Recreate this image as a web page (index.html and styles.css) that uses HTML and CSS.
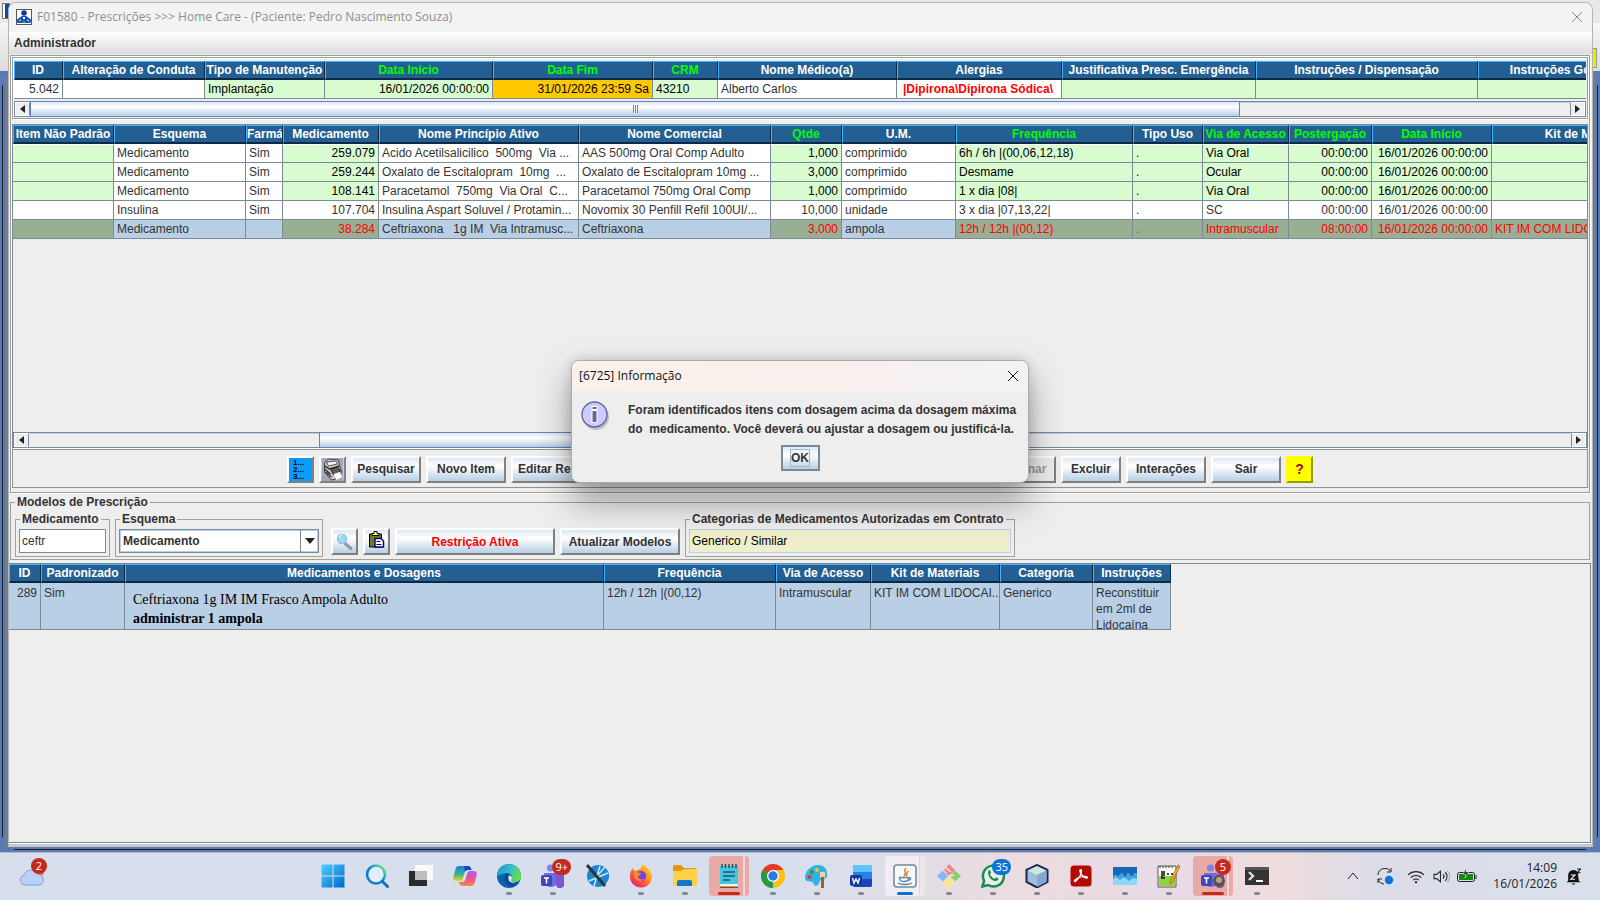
FILE: index.html
```html
<!DOCTYPE html>
<html lang="pt-BR">
<head>
  <meta charset="UTF-8">
  <meta name="viewport" content="width=device-width, initial-scale=1.0">
  <title>F01580 - Prescrições</title>
  <link rel="stylesheet" href="styles.css">
</head>
<body>
  <div class="desktop">
    <div class="back-icon"></div>
    <div class="back-yellow"></div>
    <main class="window">
      <header class="titlebar">
        <svg class="app-icon" viewBox="0 0 16 16"><rect x=".5" y=".5" width="15" height="15" fill="#fff" stroke="#555"/><circle cx="8" cy="4" r="2.800" fill="#0b3c9c"/><path d="M2 14c-1.500-1-1.500-4 .5-4.500L6 7h4l3.500 2.500c2 .5 2 3.500.5 4.500z" fill="#0d47b0"/><path d="M6.500 8h3L8 11z" fill="#fff"/><path d="M3 12.500l2-2M13 12.500l-2-2" stroke="#8fb8f0" stroke-width="1.500"/><path d="M6.500 12h3v2h-3z" fill="#2da44e"/></svg>
        <h1>F01580 - Prescrições &gt;&gt;&gt; Home Care - (Paciente: Pedro Nascimento Souza)</h1>
        <button class="close" aria-label="Fechar"><svg viewBox="0 0 12 12"><path d="M1 1l10 10M11 1L1 11"/></svg></button>
      </header>
      <nav class="menubar"><button>Administrador</button></nav>

      <section class="panel etched">
        <div class="group etched">
          <div class="clip">
            <table class="grid prescricao">
              <colgroup><col><col><col><col><col><col><col><col><col><col><col></colgroup>
              <thead>
                <tr><th>ID</th><th>Alteração de Conduta</th><th>Tipo de Manutenção</th><th class="req">Data Início</th><th class="req">Data Fim</th><th class="req">CRM</th><th>Nome Médico(a)</th><th>Alergias</th><th>Justificativa Presc. Emergência</th><th>Instruções / Dispensação</th><th>Instruções Gerais</th></tr>
              </thead>
              <tbody>
                <tr><td class="num">5.042</td><td></td><td class="edit">Implantação</td><td class="edit num">16/01/2026 00:00:00</td><td class="warn num">31/01/2026 23:59 Sa</td><td class="edit">43210</td><td>Alberto Carlos</td><td class="alergia">|Dipirona\Dipirona Sódica\</td><td class="edit"></td><td class="edit"></td><td class="edit"></td></tr>
              </tbody>
            </table>
          </div>
          <div class="scrollbar">
            <button class="arrow left" aria-label="Esquerda"></button>
            <div class="track"><div class="thumb thumb-top"><i></i></div></div>
            <button class="arrow right" aria-label="Direita"></button>
          </div>
        </div>

        <div class="items">
          <div class="clip viewport">
            <table class="grid itens">
              <colgroup><col><col><col><col><col><col><col><col><col><col><col><col><col><col></colgroup>
              <thead>
                <tr><th>Item Não Padrão</th><th>Esquema</th><th class="cut">Farmá</th><th>Medicamento</th><th>Nome Princípio Ativo</th><th>Nome Comercial</th><th class="req">Qtde</th><th>U.M.</th><th class="req">Frequência</th><th>Tipo Uso</th><th class="req">Via de Acesso</th><th class="req">Postergação</th><th class="req">Data Início</th><th>Kit de Materiais</th></tr>
              </thead>
              <tbody>
                <tr><td class="edit"></td><td>Medicamento</td><td>Sim</td><td class="edit num">259.079</td><td>Acido Acetilsalicilico  500mg  Via ...</td><td>AAS 500mg Oral Comp Adulto</td><td class="edit num">1,000</td><td>comprimido</td><td class="edit">6h / 6h |(00,06,12,18)</td><td class="edit">.</td><td class="edit">Via Oral</td><td class="edit num">00:00:00</td><td class="edit num">16/01/2026 00:00:00</td><td class="edit"></td></tr>
                <tr><td class="edit"></td><td>Medicamento</td><td>Sim</td><td class="edit num">259.244</td><td>Oxalato de Escitalopram  10mg  ...</td><td>Oxalato de Escitalopram 10mg ...</td><td class="edit num">3,000</td><td>comprimido</td><td class="edit">Desmame</td><td class="edit">.</td><td class="edit">Ocular</td><td class="edit num">00:00:00</td><td class="edit num">16/01/2026 00:00:00</td><td class="edit"></td></tr>
                <tr><td class="edit"></td><td>Medicamento</td><td>Sim</td><td class="edit num">108.141</td><td>Paracetamol  750mg  Via Oral  C...</td><td>Paracetamol 750mg Oral Comp</td><td class="edit num">1,000</td><td>comprimido</td><td class="edit">1 x dia |08|</td><td class="edit">.</td><td class="edit">Via Oral</td><td class="edit num">00:00:00</td><td class="edit num">16/01/2026 00:00:00</td><td class="edit"></td></tr>
                <tr><td></td><td>Insulina</td><td>Sim</td><td class="num">107.704</td><td>Insulina Aspart Soluvel / Protamin...</td><td>Novomix 30 Penfill Refil 100UI/...</td><td class="num">10,000</td><td>unidade</td><td>3 x dia |07,13,22|</td><td>.</td><td>SC</td><td class="num">00:00:00</td><td class="num">16/01/2026 00:00:00</td><td></td></tr>
                <tr class="selected"><td class="edit"></td><td>Medicamento</td><td></td><td class="edit num">38.284</td><td>Ceftriaxona   1g IM  Via Intramusc...</td><td>Ceftriaxona</td><td class="edit num">3,000</td><td>ampola</td><td class="edit">12h / 12h |(00,12)</td><td class="edit">.</td><td class="edit">Intramuscular</td><td class="edit num">08:00:00</td><td class="edit num">16/01/2026 00:00:00</td><td class="edit">KIT IM COM LIDOCAINA</td></tr>
              </tbody>
            </table>
          </div>
          <div class="scrollbar">
            <button class="arrow left" aria-label="Esquerda"></button>
            <div class="track"><div class="thumb thumb-items"></div></div>
            <button class="arrow right" aria-label="Direita"></button>
          </div>
        </div>

        <div class="toolbar">
          <button class="btn icon list" aria-label="Lista"><span>1...</span><span>2...</span><span>3...</span></button>
          <button class="btn icon" aria-label="Imprimir"><svg viewBox="0 0 22 23"><path fill="#a5a5bd" d="M0 0h22v23H0z"/><path d="M3 5l4-4 10 1 1 6 2 5-2 7-8 2-7-8z" fill="#c9c9c9" stroke="#444"/><path d="M5 4l9-1 2 3-9 2z" fill="#f4f4f4" stroke="#555"/><path d="M3 8l5 3 10-3M3 11l6 5M4 14l6 5" stroke="#333" stroke-width="1.500" fill="none"/><path d="M9 11l7-2 3 4-7 4z" fill="#6b5555" stroke="#222"/><path d="M12 16l6-2 3 5-6 3z" fill="#fff"/></svg></button>
          <button class="btn w70">Pesquisar</button>
          <button class="btn w80">Novo Item</button>
          <button class="btn w106">Editar Restrição</button>
          <button class="btn disabled" disabled>Selecionar</button>
          <button class="btn w60">Excluir</button>
          <button class="btn w80">Interações</button>
          <button class="btn w70">Sair</button>
          <button class="btn icon help" aria-label="Ajuda">?</button>
        </div>
      </section>

      <fieldset class="modelos">
        <legend>Modelos de Prescrição</legend>
        <div class="filters">
          <fieldset class="box box-med">
            <legend><label for="medicamento">Medicamento</label></legend>
            <input id="medicamento" type="text" value="ceftr">
          </fieldset>
          <fieldset class="box box-esq">
            <legend><label for="esquema">Esquema</label></legend>
            <div class="combo"><select id="esquema"><option>Medicamento</option></select></div>
          </fieldset>
          <button class="btn icon search" aria-label="Buscar"><svg viewBox="0 0 22 23"><path d="M11.500 13.500l6 5" stroke="#8d98a5" stroke-width="3" stroke-linecap="round"/><circle cx="8.500" cy="9" r="4.500" fill="#8fdcfa" stroke="#a9bccb" stroke-width="1.500"/><path d="M6 8c0-2 1-3 3-3" stroke="#fff" fill="none"/></svg></button>
          <button class="btn icon" aria-label="Colar"><svg viewBox="0 0 22 23"><path d="M4 4h12v13H4z" fill="#767621" stroke="#000"/><path d="M6.500 5.500h7V3.500h-2v-2h-3v2h-2z" fill="#ff6" stroke="#000"/><path d="M9.500 8.500h6l2.500 2.500v6H9.500z" fill="#fff" stroke="#000080" stroke-width="1.400"/><path d="M11 11.500h4M11 14.500h5" stroke="#000080"/></svg></button>
          <button class="btn w160 alert">Restrição Ativa</button>
          <button class="btn w120">Atualizar Modelos</button>
          <fieldset class="box box-cat">
            <legend><label for="categorias">Categorias de Medicamentos Autorizadas em Contrato</label></legend>
            <input id="categorias" class="yellow" type="text" value="Generico / Similar" readonly>
          </fieldset>
        </div>
      </fieldset>

      <section class="results">
        <table class="grid modelo">
          <colgroup><col><col><col><col><col><col><col><col></colgroup>
          <thead>
            <tr><th>ID</th><th>Padronizado</th><th>Medicamentos e Dosagens</th><th>Frequência</th><th>Via de Acesso</th><th>Kit de Materiais</th><th>Categoria</th><th>Instruções</th></tr>
          </thead>
          <tbody>
            <tr><td class="num">289</td><td>Sim</td><td class="dosagem">Ceftriaxona 1g IM IM Frasco Ampola Adulto<br><b>administrar 1 ampola</b></td><td>12h / 12h |(00,12)</td><td>Intramuscular</td><td class="kit">KIT IM COM LIDOCAI...</td><td>Generico</td><td><div class="multi">Reconstituir<br>em 2ml de<br>Lidocaína</div></td></tr>
          </tbody>
        </table>
      </section>
    </main>
  </div>

  <div class="dialog" role="dialog" aria-labelledby="dlg-title">
    <div class="dialog-title">
      <h2 id="dlg-title">[6725] Informação</h2>
      <button class="close" aria-label="Fechar"><svg viewBox="0 0 12 12"><path d="M1 1l10 10M11 1L1 11"/></svg></button>
    </div>
    <div class="dialog-body">
      <svg class="info" viewBox="0 0 32 32"><circle cx="15" cy="16" r="13" fill="#8a8a8a" opacity=".45"/><circle cx="13.500" cy="13.500" r="12.500" fill="#ccf" stroke="#669" stroke-width="1.400"/><path d="M11 5.500h5v3h-5zM11 9.500h5v12h-5z" fill="#669" stroke="#fff"/></svg>
      <p>Foram identificados itens com dosagem acima da dosagem máxima<br>do&nbsp; medicamento. Você deverá ou ajustar a dosagem ou justificá-la.</p>
    </div>
    <div class="dialog-actions"><button class="ok"><span>OK</span></button></div>
  </div>

  <footer class="taskbar">
    <div class="weather">
      <svg viewBox="0 0 26 22"><circle cx="20" cy="7" r="5" fill="#f5842a"/><path d="M6 20a5 5 0 0 1-1-9.800A7.500 7.500 0 0 1 19 9.500a5.300 5.300 0 0 1 1 10.500z" fill="#b9d0f7" stroke="#7fa3e6"/></svg>
      <span class="badge red">2</span>
    </div>

    <div class="apps">
      <button class="app" aria-label="Iniciar"><svg viewBox="0 0 24 24"><defs><linearGradient id="win" x2="1" y2="1"><stop stop-color="#4fd0ff"/><stop offset="1" stop-color="#0067c9"/></linearGradient></defs><path d="M.5.5h11v11H.5zM12.500.5h11v11h-11zM.5 12.500h11v11H.5zM12.500 12.500h11v11h-11z" fill="url(#win)"/></svg></button>
      <button class="app" aria-label="Pesquisar"><svg viewBox="0 0 24 24"><defs><linearGradient id="lupa" x1="1" x2="0" y2="1"><stop offset=".1" stop-color="#5fe08a"/><stop offset=".5" stop-color="#0d7fd8"/></linearGradient></defs><circle cx="11" cy="10.500" r="9" fill="#e3eefa" stroke="url(#lupa)" stroke-width="2.600"/><path d="M17.500 17.500l5 5" stroke="#0a72cc" stroke-width="3" stroke-linecap="round"/></svg></button>
      <button class="app" aria-label="Tarefas"><svg viewBox="0 0 24 24"><path d="M0 7h18v15H0z" fill="#2c2c2c"/><path d="M6 1h18v15H6z" fill="#fafafa"/><path d="M6 7h12v9H6z" fill="#bdbdbd"/></svg></button>
      <button class="app" aria-label="Copilot"><svg viewBox="0 0 24 24"><defs><linearGradient id="cpa" y2="1" x2="0"><stop stop-color="#1382e6"/><stop offset=".55" stop-color="#3bb58a"/><stop offset="1" stop-color="#f5d321"/></linearGradient><linearGradient id="cpb" y2="1" x2="0"><stop stop-color="#b15bee"/><stop offset=".6" stop-color="#f0568c"/><stop offset="1" stop-color="#ff8c3a"/></linearGradient></defs><path d="M6 2h9c2 0 3 2 3.500 4H15c-2 0-3 1-3.500 3L10 14c-.6 2-1.500 3-3 3H3c-3 0-3-3-2.500-5l2-7C3 3 4 2 6 2z" fill="url(#cpa)"/><path d="M11 2h4c2 0 3 2 3.500 4H15c-1.500 0-2.500.5-3 2z" fill="#1746c8"/><path d="M18 22H9c-2 0-2.500-2-3-4h3c2 0 3-1 3.500-3L14 10c.6-2 1.500-3 3-3h4c3 0 3 3 2.500 5l-2 7c-.5 2-1.500 3-3.500 3z" fill="url(#cpb)"/></svg></button>
      <button class="app run" aria-label="Edge"><svg viewBox="0 0 24 24"><defs><linearGradient id="edge" x2="1" y2=".4"><stop stop-color="#1593dc"/><stop offset=".6" stop-color="#35c1c8"/><stop offset="1" stop-color="#62dc4e"/></linearGradient></defs><circle cx="12" cy="12" r="12" fill="#0f5fb0"/><path d="M0 12a12 12 0 0 1 24 0c0 4-3 6-6 6-2.500 0-4-1-4-2 0-.8 1-1 1-3s-2-4-5-4c-5 0-8 3-10 3z" fill="url(#edge)"/><path d="M10 9c-5 3-3 12 4 13 3 .5 6-1 8-3-6 2-10-1-10-4 0-3 0-5-2-6z" fill="#0b4a92"/><path d="M12 11.500c1 0 3 .5 3 2.500 0 1-1 1.500-1 2.200 0 1 2 2 4 2-2 1.500-6 0-6.500-3-.2-1.500 0-3 .5-3.700z" fill="#e3eaf5"/></svg></button>
      <button class="app run" aria-label="Teams"><svg viewBox="0 0 24 24"><circle cx="9.500" cy="4" r="3.600" fill="#7e84ec"/><circle cx="18" cy="6" r="3" fill="#5059c9"/><path d="M3 9h13v9a6 6 0 0 1-6 5 6 6 0 0 1-6-5z" fill="#6a70e2"/><path d="M15 10h8v9a4 4 0 0 1-8 2z" fill="#7b57d6"/><rect x="0" y="11" width="11" height="11" rx="2" fill="#4048b8"/><path d="M3 14h5M5.500 14v5.500" stroke="#fff" stroke-width="1.500"/></svg><span class="badge red">9+</span></button>
      <button class="app" aria-label="Editor"><svg viewBox="0 0 24 24"><circle cx="13" cy="12" r="11" fill="#1b86d6"/><path d="M4 17L23 9M9 22L15 2M12 12l8-9" stroke="#cfe8fb" stroke-width="1.500"/><path d="M2 1l18 21" stroke="#333" stroke-width="3"/></svg></button>
      <button class="app run" aria-label="Firefox"><svg viewBox="0 0 24 24"><defs><linearGradient id="ff" x1="1" x2=".2" y2="1"><stop stop-color="#ffe52e"/><stop offset=".45" stop-color="#ff9422"/><stop offset=".8" stop-color="#ff3a55"/><stop offset="1" stop-color="#e31587"/></linearGradient></defs><path d="M14 0c3 3 8 6 9 12a11 11 0 0 1-22 1C.7 9 2 6 4 4l1 3 4-1c1-1 3-1 3-2 0-2 1-3 2-4z" fill="url(#ff)"/><circle cx="12" cy="12" r="5.200" fill="#7542e5"/><path d="M5 8c3-1 4 1 7 1 0 2-3 2-3 4 0 2 3 3 6 2-3 4-9 2-10-3z" fill="#ff8a1e"/></svg></button>
      <button class="app run" aria-label="Explorador"><svg viewBox="0 0 24 24"><path d="M0 3a2 2 0 0 1 2-2h6l3 3h11a2 2 0 0 1 2 2v6H0z" fill="#e09a12"/><path d="M0 7h8l3-2h13v17H0z" fill="#ffd04a"/><path d="M4 22v-4a2 2 0 0 1 2-2h11a2 2 0 0 1 2 2v4z" fill="#1478c8"/></svg></button>
      <button class="app run attention" aria-label="Bloco de notas"><svg viewBox="0 0 24 24"><path d="M3 2h18v19H3z" fill="#49c3de"/><path d="M3 20h18v3H3z" fill="#f5efe4"/><path d="M3 22.500h18v1.500H3z" fill="#8a4b17"/><path d="M5 0v4M8.500 0v4M12 0v4M15.500 0v4M19 0v4" stroke="#174c68" stroke-width="1.400"/><path d="M6 8h12M6 12h12M6 16h7" stroke="#135a80" stroke-width="1.600"/></svg></button>
      <button class="app run" aria-label="Chrome"><svg viewBox="0 0 24 24"><circle cx="12" cy="12" r="12" fill="#fbc116"/><path d="M12 12L1.600 6A12 12 0 0 1 22.400 6z" fill="#e33b2e"/><path d="M12 12L1.600 6A12 12 0 0 0 12 24z" fill="#279847"/><path d="M12 6h10.400L17 15z" fill="#fbc116"/><circle cx="12" cy="12" r="6" fill="#fff"/><circle cx="12" cy="12" r="4.700" fill="#2c7be9"/></svg></button>
      <button class="app run" aria-label="Paint"><svg viewBox="0 0 24 24"><path d="M13 1c6 0 10 4 9 11-1 4-4 3-6 4s-2 6-5 6c-2 0-2-3-4-4s-7 0-7-4C0 7 6 1 13 1z" fill="#2fb3ea"/><circle cx="4.500" cy="13" r="2" fill="#d63a2f"/><circle cx="7" cy="8" r="2.200" fill="#3a9b3c"/><circle cx="12" cy="6" r="2" fill="#f6c22d"/><path d="M15 8h5v6h-5z" fill="#f3d09b"/><path d="M16 13h3v11h-3z" fill="#a65f23"/></svg></button>
      <button class="app run" aria-label="Word"><svg viewBox="0 0 24 24"><rect x="4" y="1" width="19" height="22" rx="2" fill="#2a7fe6"/><path d="M4 3c0-1 1-2 2-2h15c1 0 2 1 2 2v5H4z" fill="#62c4ff"/><path d="M4 15h19v6c0 1-1 2-2 2H6c-1 0-2-1-2-2z" fill="#1b44bd"/><rect x="1" y="11" width="12" height="11" rx="2" fill="#123a9c"/><path d="M3.500 14l1.500 5 2-4 2 4 1.500-5" stroke="#fff" stroke-width="1.400" fill="none"/></svg></button>
      <button class="app run active" aria-label="Java"><svg viewBox="0 0 24 24"><rect x="1" y="1" width="22" height="22" rx="3" fill="#f7f8fa" stroke="#71879b" stroke-width="1.500"/><path d="M13 4c-4 4 2 4-2 8M15.500 7c-3 2-1 3-2.500 5" stroke="#ee7a25" stroke-width="1.500" fill="none"/><path d="M6.500 13.500h9c0 3-1 4-4.500 4s-4-1-4.500-4zM15.500 14c3-1 3 2-.5 2.500M5 19c3 2 11 2 14 0" stroke="#5d85a5" stroke-width="1.400" fill="none"/></svg></button>
      <button class="app run" aria-label="Git"><svg viewBox="0 0 24 24"><path d="M12 0l6 6-6 6-5-6z" fill="#f58585"/><path d="M5.500 6.500L11 12l-5 5.500L0 12z" fill="#86b5fb"/><path d="M18 6.500l6 5.500-6 5.500-5-5.500z" fill="#8acb6a"/><path d="M12 13l5.500 5.500L12 24l-6-5.500z" fill="#fbe68a"/><path d="M9 4l5 4M12 12l5-1" stroke="#eee" stroke-width="1.500"/></svg></button>
      <button class="app run" aria-label="WhatsApp"><svg viewBox="0 0 24 24"><path d="M1.500 22.500l1.600-5.700A10.500 10.500 0 1 1 7 21z" fill="#e8efe9" stroke="#1c8a50" stroke-width="2.500"/><path d="M7.500 6.500c1-1 2 0 2.500 2 0 1-1 1-1 1.700 1 2.300 2.300 3.500 4.500 4.500.8 0 1-1.300 2-1.200 2 .8 2.500 1.500 1.500 2.500-4 4-12-4-9.500-9.500z" fill="#1c8a50"/></svg><span class="badge blue">35</span></button>
      <button class="app run" aria-label="VirtualBox"><svg viewBox="0 0 24 24"><path d="M12 1l10.500 5v12L12 23.500 1.500 18V6z" fill="#9cc0dc" stroke="#1b2550" stroke-width="2"/><path d="M12 2l9.500 4.500L12 11 2.500 6.500z" fill="#cfe6dc"/><path d="M12 11v12l9.500-5V6.500z" fill="#86a7cf"/></svg></button>
      <button class="app run" aria-label="Acrobat"><svg viewBox="0 0 24 24"><rect x="1.500" y="1.500" width="21" height="21" rx="3.500" fill="#b30b00"/><path d="M6 17.500c3-1 7-8 6.500-11-.5-1.500-2-.5-1.500 1 .8 3 4 7 7 6.500 1-.5 0-1.600-2-1.600-3.500 0-8 1.800-10 3.600-.8 1-.5 1.600 0 1.500z" fill="none" stroke="#fff" stroke-width="1.400"/></svg></button>
      <button class="app run" aria-label="Monitor"><svg viewBox="0 0 24 24"><path d="M0 3h24v18H0z" fill="#8fd6fa"/><path d="M0 3h24v7l-2-1-3 4-4-4-3 5-3-5-4 4-2-2-3 1z" fill="#1668b8"/><path d="M0 12l3-1 2 2 4-4 3 5 3-5 4 4 3-4 2 1v5l-4-1-4 3-5-4-4 3-4-3-3 2z" fill="#3fa3e6"/></svg></button>
      <button class="app run" aria-label="Notepad++"><svg viewBox="0 0 24 24"><path d="M1 2h18v21H1z" fill="#f7f7f4" stroke="#555"/><path d="M2 12h16v10H2z" fill="#92d33a"/><path d="M3 2v2M6 2v2M9 2v2M12 2v2M15 2v2" stroke="#444"/><path d="M5 7v7h3M7 7v5M10 10h2M14 10h2" stroke="#111" stroke-width="1.500" fill="none"/><path d="M21 1l2 1-8 17-2 1 0-2.500z" fill="#f3b229" stroke="#8a5a17" stroke-width=".7"/></svg></button>
      <button class="app run attention" aria-label="Teams"><svg viewBox="0 0 24 24"><circle cx="9.500" cy="4" r="3.600" fill="#7e84ec"/><path d="M3 9h13v9a6 6 0 0 1-6 5 6 6 0 0 1-6-5z" fill="#6a70e2"/><path d="M15 10h8v9a4 4 0 0 1-8 2z" fill="#7b57d6"/><rect y="11" width="11" height="11" rx="2" fill="#4048b8"/><path d="M3 14h5M5.500 14v5.500" stroke="#fff" stroke-width="1.500"/><circle cx="18" cy="17" r="6" fill="#555"/><circle cx="18" cy="16" r="3" fill="#c49a86"/></svg><span class="badge red">5</span></button>
      <button class="app run" aria-label="Terminal"><svg viewBox="0 0 24 24"><path d="M0 3h24v18H0z" fill="#333"/><path d="M0 3h24v3H0z" fill="#555"/><path d="M4 8l4 4-4 4" stroke="#ddd" stroke-width="2.400" fill="none"/><path d="M11 17h7" stroke="#fff" stroke-width="2"/></svg></button>
    </div>

    <div class="tray">
      <svg class="chev" viewBox="0 0 12 12"><path d="M1 9l5-6 5 6"/></svg>
      <svg class="sync" viewBox="0 0 18 18"><path d="M2 8a7 7 0 0 1 12.500-4M15 1v4h-4M2 16v-4h4M2 12a7 7 0 0 0 6 5"/><circle cx="13" cy="13" r="4.200"/></svg>
      <svg class="wifi" viewBox="0 0 16 16"><path d="M1 7a10 10 0 0 1 14 0M3.300 9.500a6.600 6.600 0 0 1 9.400 0M5.500 11.700a3.600 3.600 0 0 1 5 0"/><circle cx="8" cy="13.500" r="1"/></svg>
      <svg class="sound" viewBox="0 0 16 16"><path d="M1 6h2.500L7 3v10L3.500 10H1zM9.500 6a3 3 0 0 1 0 4M11.500 4a5.500 5.500 0 0 1 0 8"/><path d="M13.500 2.500a8 8 0 0 1 0 11" stroke="#aaa"/></svg>
      <svg class="battery" viewBox="0 0 22 16"><rect x="1.500" y="4.500" width="17" height="9" rx="2"/><path class="cap" d="M20 7v4"/><path class="fill" d="M3 6h14v6H3z"/><path class="bolt" d="M10.500 0L7 6h3l-1 4 4-6h-3z"/></svg>
      <div class="clock"><span>14:09</span><span>16/01/2026</span></div>
      <svg class="bell" viewBox="0 0 16 16"><path d="M3 12V6a5 5 0 0 1 9-2l1 8 1.500 1.500h-13zM6 14.500h4L8 16z" fill="#111"/><path d="M5.500 6.500h4l-4 4h4" stroke="#fff" fill="none"/><path d="M11.500 1h3l-3 3.500h3" stroke="#111" fill="none"/></svg>
    </div>
  </footer>
</body>
</html>
```
FILE: styles.css
```css
* {
  box-sizing: border-box;
}

body {
  margin: 0;
  height: 100vh;
  display: flex;
  flex-direction: column;
  overflow: hidden;
  font-family: "Liberation Sans", Arial, sans-serif;
  font-size: 12px;
  color: #333;
}

button, input, select {
  font: inherit;
  color: inherit;
  margin: 0;
}

button {
  padding: 0;
  border: 0;
  background: none;
}

/* parent window peeking out behind the form */
.desktop {
  position: relative;
  flex: 1;
  min-height: 0;
  display: flex;
  padding: 2px 7px 5px 8px;
  background:
    linear-gradient(#e8e8e8, #e8e8e8) 0 0 / 100% 23px no-repeat,
    linear-gradient(#f6f6f6, #dcdcdc) 0 23px / 100% 48px no-repeat,
    linear-gradient(#222, #222) 14px calc(100% - 2px) / calc(100% - 28px) 1px no-repeat,
    linear-gradient(#222, #222) 2px 85px / 1px calc(100% - 100px) no-repeat,
    linear-gradient(#222, #222) calc(100% - 2px) 85px / 1px calc(100% - 100px) no-repeat,
    linear-gradient(#6f7d8d, #6f7d8d) 5px 76px / calc(100% - 9px) calc(100% - 81px) no-repeat,
    #5a7ab5;
}

.back-icon {
  position: absolute;
  left: 2px;
  top: 3px;
  width: 8px;
  height: 16px;
  border: 1px solid #777;
  background: linear-gradient(to right, #fff 40%, #0d47b0 40%);
}

.back-yellow {
  position: absolute;
  right: 3px;
  top: 48px;
  width: 8px;
  height: 20px;
  border: 1px solid #999;
  background: #ebeb00;
}

.window {
  position: relative;
  flex: 1;
  min-width: 0;
  display: flex;
  flex-direction: column;
  border: 1px solid #b4b4b4;
  border-bottom: 3px solid #c9c9c9;
  border-radius: 8px 8px 0 0;
  background: #eee;
  overflow: hidden;
}

.titlebar {
  height: 29px;
  display: flex;
  align-items: center;
  gap: 5px;
  padding: 0 9px 1px 7px;
  background: #f3f3f3;
}

.app-icon {
  width: 16px;
  height: 16px;
}

.titlebar h1 {
  flex: 1;
  margin: 0;
  font: 12px/16px "Open Sans", "Noto Sans", sans-serif;
  color: #8f8f8f;
}

.close {
  width: 12px;
  height: 12px;
}

.close svg {
  display: block;
  width: 12px;
  height: 12px;
  fill: none;
  stroke: #888;
}

.menubar {
  height: 22px;
  display: flex;
  align-items: center;
  padding-left: 5px;
  background: linear-gradient(#fff, #dcdcdc);
}

.menubar button {
  font-weight: bold;
}

.etched {
  border: 1px solid #9d9d97;
  box-shadow: inset 1px 1px #fff, 1px 1px #fff;
}

.panel {
  margin: 1px 2px 0 1px;
  padding: 1px;
}

.group {
  padding: 3px 1px 1px;
}

.clip {
  overflow: hidden;
}

/* tables */
.grid {
  table-layout: fixed;
  border-collapse: separate;
  border-spacing: 0;
}

.grid th {
  height: 19px;
  padding: 1px 1px 0 0;
  border: 1px solid #3fb4ff;
  border-right-color: #0b2a45;
  border-bottom: 2px solid #0b2a45;
  background: #235f93;
  color: #fff;
  line-height: 15px;
  white-space: nowrap;
}

.grid th.req {
  color: #0f0;
}

.grid th.cut {
  overflow: hidden;
  text-align: left;
}

.grid td {
  height: 19px;
  padding: 1px 3px 0;
  border-right: 1px solid #7a8a99;
  border-bottom: 1px solid #7a8a99;
  background: #fff;
  line-height: 17px;
  white-space: pre;
  overflow: hidden;
}

.grid .num {
  text-align: right;
}

.grid .edit {
  background: #d9fbd0;
  color: #000;
}

.grid .warn {
  background: #ffc800;
  color: #000;
}

.grid .alergia {
  padding-left: 6px;
  font-weight: bold;
  color: #f00;
}

.grid .selected td {
  background: #b8cfe5;
}

.grid .selected .edit {
  background: #98af94;
  color: #f00;
}

.prescricao { width: 1630px; }
.prescricao col:nth-child(1) { width: 49px; }
.prescricao col:nth-child(2) { width: 142px; }
.prescricao col:nth-child(3) { width: 120px; }
.prescricao col:nth-child(4) { width: 168px; }
.prescricao col:nth-child(5) { width: 160px; }
.prescricao col:nth-child(6) { width: 65px; }
.prescricao col:nth-child(7) { width: 179px; }
.prescricao col:nth-child(8) { width: 165px; }
.prescricao col:nth-child(9) { width: 194px; }
.prescricao col:nth-child(10) { width: 222px; }
.prescricao col:nth-child(11) { width: 166px; }

.itens { width: 1674px; }
.itens col:nth-child(1) { width: 101px; }
.itens col:nth-child(2) { width: 132px; }
.itens col:nth-child(3) { width: 37px; }
.itens col:nth-child(4) { width: 96px; }
.itens col:nth-child(5) { width: 200px; }
.itens col:nth-child(6) { width: 192px; }
.itens col:nth-child(7) { width: 71px; }
.itens col:nth-child(8) { width: 114px; }
.itens col:nth-child(9) { width: 177px; }
.itens col:nth-child(10) { width: 70px; }
.itens col:nth-child(11) { width: 86px; }
.itens col:nth-child(12) { width: 83px; }
.itens col:nth-child(13) { width: 120px; }
.itens col:nth-child(14) { width: 195px; }

.modelo { width: 1162px; }
.modelo col:nth-child(1) { width: 32px; }
.modelo col:nth-child(2) { width: 84px; }
.modelo col:nth-child(3) { width: 479px; }
.modelo col:nth-child(4) { width: 172px; }
.modelo col:nth-child(5) { width: 95px; }
.modelo col:nth-child(6) { width: 129px; }
.modelo col:nth-child(7) { width: 93px; }
.modelo col:nth-child(8) { width: 78px; }

.modelo td {
  height: 47px;
  padding-top: 2px;
  vertical-align: top;
  background: #b8cfe5;
  line-height: 16px;
}

.modelo .dosagem {
  padding: 7px 8px 0;
  font: 14px/19px "Liberation Serif", "Times New Roman", serif;
  color: #000;
}

.modelo .kit {
  padding-right: 0;
}

.multi {
  height: 44px;
  overflow: hidden;
}

/* scrollbars */
.scrollbar {
  display: flex;
  height: 16px;
  border: 1px solid #7a8a99;
  background: #eee;
}

.group .scrollbar {
  margin-top: 2px;
}

.arrow {
  width: 15px;
  display: flex;
  align-items: center;
  justify-content: center;
  border: 1px solid #fff;
}

.arrow::before {
  content: "";
  border: 4px solid transparent;
}

.arrow.left {
  border-right: 1px solid #7a8a99;
}

.arrow.left::before {
  border-right: 5px solid #222;
  border-left: 0;
}

.arrow.right {
  border-left: 1px solid #7a8a99;
}

.arrow.right::before {
  border-left: 5px solid #222;
  border-right: 0;
}

.track {
  flex: 1;
  border-top: 1px solid #b8cfe5;
}

.thumb {
  height: 16px;
  margin-top: -2px;
  border: 1px solid #6382bf;
  background: linear-gradient(#dde8f3, #fff 35%, #b8cfe5);
}

.thumb-top {
  width: 78.6%;
  display: flex;
  align-items: center;
  justify-content: center;
}

.thumb-top i {
  width: 5px;
  height: 8px;
  background: repeating-linear-gradient(to right, #6382bf 0 1px, #fff 1px 2px);
}

.thumb-items {
  width: 33%;
  margin-left: 18.8%;
}

.items {
  margin-top: 5px;
  border: 1px solid #7a8a99;
  border-bottom-color: #fff;
}

.viewport {
  height: 307px;
}

.itens tbody tr:first-child td {
  padding-top: 0;
  border-top: 1px solid #fff;
}

/* buttons */
.toolbar {
  display: flex;
  align-items: center;
  justify-content: center;
  gap: 5px;
  height: 39px;
  padding-top: 1px;
  margin-bottom: 3px;
  border: 1px solid #8c9590;
}

.btn {
  height: 27px;
  padding: 0 4px;
  border: 2px solid #fff;
  border-right-color: #808080;
  border-bottom-color: #808080;
  background: linear-gradient(#dde8f3, #fff 35%, #b8cfe5);
  font-weight: bold;
  white-space: nowrap;
}

.btn.icon {
  width: 27px;
  padding: 0;
  flex: none;
}

.btn.icon svg {
  display: block;
  width: 23px;
  height: 23px;
}

.btn.list {
  padding-left: 4px;
  background: #0a9bff;
  color: #000;
  font-size: 8px;
  line-height: 7px;
  text-align: left;
}

.btn.list span {
  display: block;
}

.w60 { width: 60px; }
.w70 { width: 70px; }
.w80 { width: 80px; }
.w106 { width: 106px; }
.w120 { width: 120px; }
.w160 { width: 160px; }

.btn.disabled {
  width: 80px;
  margin-left: 354px;
  background: #eee;
  color: #999;
}

.btn.help {
  border-color: #ff0 #990 #990 #ff0;
  background: #ff0;
  color: #b00000;
  font-size: 14px;
}

.btn.alert {
  color: #f00;
}

/* filters */
fieldset {
  min-width: 0;
  margin: 0;
  border: 1px solid #a3a096;
}

legend {
  padding: 0 2px;
  font-weight: bold;
  line-height: 14px;
}

.modelos {
  margin: 2px 2px 0 1px;
  padding: 3px 4px 2px;
}

.filters {
  display: flex;
  align-items: flex-end;
  gap: 5px;
}

.filters > .btn {
  margin-bottom: 2px;
}

.box {
  padding: 3px;
}

.box legend {
  margin-left: 1px;
}

.box-med { width: 95px; }
.box-esq { width: 208px; }
.box-cat { width: 330px; }

.btn.search {
  margin-left: 3px;
}

.box input {
  display: block;
  width: 100%;
  height: 24px;
  padding: 0 2px;
  border: 1px solid #7a8a99;
  background: #fff;
}

.box input.yellow {
  border: 1px solid #b8cfe5;
  background: #efefce;
  color: #000;
}

.combo {
  position: relative;
  border: 1px solid #7a8a99;
}

.combo select {
  display: block;
  width: 100%;
  height: 22px;
  padding: 0 2px;
  border: 1px solid #b8cfe5;
  border-radius: 0;
  appearance: none;
  background: #fff;
  font-weight: bold;
}

.combo::after {
  content: "";
  position: absolute;
  right: 3px;
  top: 8px;
  border: 5px solid transparent;
  border-top: 6px solid #222;
  border-bottom: 0;
}

.combo::before {
  content: "";
  position: absolute;
  right: 17px;
  top: 0;
  height: 22px;
  border-left: 1px solid #7a8a99;
}

.results {
  flex: 1;
  min-height: 0;
  margin: 3px 1px 1px 0;
  border: 1px solid #7a8a99;
  border-left: 0;
  box-shadow: 0 1px #fff;
}

/* message */
.dialog {
  position: absolute;
  left: 50%;
  top: 360px;
  width: 458px;
  transform: translateX(-50%);
  border: 1px solid #aaa;
  border-radius: 8px;
  background: #eee;
  box-shadow: 0 18px 36px rgba(0, 0, 0, 0.36), 0 0 12px rgba(0, 0, 0, 0.15);
  overflow: hidden;
}

.dialog-title {
  height: 30px;
  display: flex;
  align-items: center;
  justify-content: space-between;
  padding: 0 9px 0 7px;
  background: linear-gradient(to right, #f9f1ea, #f9f0ee 60%, #f2f2f5);
}

.dialog-title h2 {
  margin: 0;
  font: 12px/16px "Open Sans", "Noto Sans", sans-serif;
  color: #111;
}

.dialog-title .close svg {
  stroke: #111;
}

.dialog-body {
  display: flex;
  gap: 15px;
  padding: 10px 10px 0 9px;
}

.info {
  width: 32px;
  height: 32px;
}

.dialog-body p {
  margin: 0;
  font-weight: bold;
  line-height: 19px;
  white-space: nowrap;
}

.dialog-actions {
  display: flex;
  justify-content: center;
  padding: 6px 0 11px;
}

.ok {
  width: 39px;
  height: 26px;
  border: 2px solid #7a8a99;
  background: linear-gradient(#dde8f3, #fff 35%, #b8cfe5);
  font-weight: bold;
}

.ok span {
  display: inline-block;
  border: 1px solid #a3b8cc;
  line-height: 16px;
}

/* taskbar */
.taskbar {
  height: 48px;
  display: grid;
  grid-template-columns: 1fr auto 1fr;
  align-items: center;
  padding: 0 10px 1px 0;
  border-top: 1px solid #b5bac6;
  background: linear-gradient(to right, #d8dfec 0 50%, #ecdce0 64%, #e8dae6 72%, #efdcdd 80%, #dcdce8 86%, #d8e0eb);
}

.weather {
  position: relative;
  width: 26px;
  height: 22px;
  margin-left: 19px;
}

.weather svg {
  width: 26px;
  height: 22px;
}

.badge {
  position: absolute;
  min-width: 16px;
  height: 16px;
  padding: 0 3px;
  border-radius: 8px;
  color: #fff;
  font: 11px/16px "Open Sans", "Noto Sans", sans-serif;
  text-align: center;
}

.badge.red { background: #c42b1c; }
.badge.blue { background: #0a74d4; }

.weather .badge {
  left: 12px;
  top: -7px;
}

.apps {
  display: flex;
}

.app {
  position: relative;
  width: 44px;
  height: 40px;
  display: flex;
  align-items: center;
  justify-content: center;
}

.app svg {
  position: relative;
  width: 24px;
  height: 24px;
}

.app .badge {
  right: 4px;
  top: 3px;
}

.run::after {
  content: "";
  position: absolute;
  left: 19px;
  bottom: 1px;
  width: 6px;
  height: 3px;
  border-radius: 2px;
  background: #858890;
}

.attention::before, .active::before {
  content: "";
  position: absolute;
  left: 2px;
  top: 0;
  width: 40px;
  height: 40px;
  border-radius: 4px;
  background: linear-gradient(to right, #e9a9a7 34px, #f3d6d6 34px 36px, #e9a9a7 36px);
}

.active::before {
  background: linear-gradient(to right, #f2edf2 34px, #ded6de 34px 35px, #efe6ea 35px);
}

.attention::after, .active::after {
  left: 11px;
  width: 22px;
  background: #c42b1c;
}

.active::after {
  left: 14px;
  width: 16px;
  background: #0a74d4;
}

.tray {
  display: flex;
  align-items: center;
  justify-content: flex-end;
  padding-right: 8px;
}

.tray svg {
  flex: none;
  fill: none;
  stroke: #222;
}

.chev { width: 12px; height: 12px; margin-right: 17px; }
.sync { width: 18px; height: 18px; margin-right: 13px; }
.wifi { width: 18px; height: 18px; margin-right: 8px; }
.sound { width: 17px; height: 17px; margin-right: 6px; }
.battery { width: 22px; height: 16px; margin-right: 15px; }
.bell { width: 17px; height: 17px; margin-left: 8px; }

.tray .sync circle { fill: #0a74d4; stroke: none; }
.tray .wifi circle { fill: #222; stroke: none; }
.tray .battery .fill { fill: #148a14; stroke: none; }
.tray .battery .bolt { fill: #222; stroke: #fff; stroke-width: .5; }
.tray .bell { stroke: none; }

.clock {
  display: flex;
  flex-direction: column;
  align-items: flex-end;
  font: 12px/16px "Open Sans", "Noto Sans", sans-serif;
  color: #222;
}
```
